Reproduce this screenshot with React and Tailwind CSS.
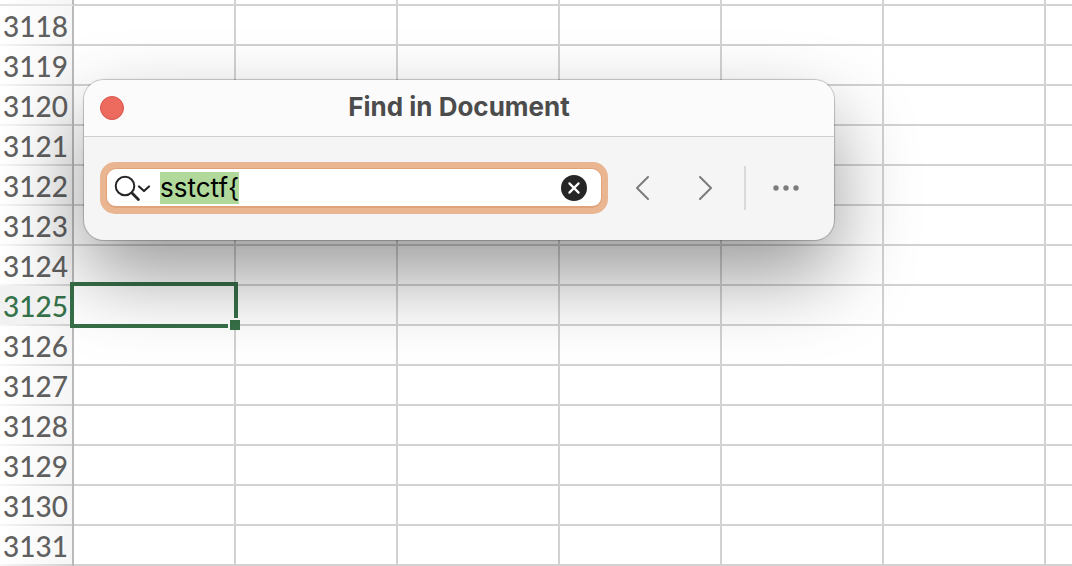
import { useEffect, useRef, useState } from "react";

const ROWS = Array.from({ length: 14 }, (_, i) => 3118 + i);
const COLUMNS = ["A", "B", "C", "D", "E", "F", "G"];
const ACTIVE = { row: 3125, column: "A" };

function RowHeader({ number, active }) {
  return (
    <th
      scope="row"
      className="h-full border-r-2 border-[#bababa] bg-linear-to-r from-[#f8f8f8] to-[#cfcfcf] p-0 pb-[2px] font-medium"
    >
      <div
        className={
          active
            ? "h-[38px] bg-linear-to-r from-[#f1f1f1] to-[#f5f5f5] pr-1 text-right text-[28px] leading-10 text-[#35724a]"
            : "h-[38px] bg-linear-to-r from-white to-[#f6f6f6] pr-1 text-right text-[28px] leading-10 text-[#5f5f5f]"
        }
      >
        {number}
      </div>
    </th>
  );
}

function Selection() {
  return (
    <div className="pointer-events-none absolute -inset-1 z-10 border-4 border-[#376f48]">
      <span className="absolute -right-[6px] -bottom-[6px] size-3 border-t-2 border-l-2 border-white bg-[#376f48]" />
    </div>
  );
}

function Sheet() {
  return (
    <table
      aria-label="Sheet"
      className="w-full table-fixed border-separate border-spacing-0 font-['Lato','Carlito',sans-serif]"
    >
      <colgroup>
        <col className="w-[74px]" />
        {COLUMNS.map((c) => (
          <col key={c} className={c === "G" ? "" : "w-[162px]"} />
        ))}
      </colgroup>
      <tbody>
        <tr className="h-[6px]">
          <td className="border-r-2 border-b-2 border-r-[#bababa] border-b-[#e4e4e4] bg-linear-to-r from-white to-[#f6f6f6] p-0" />
          {COLUMNS.map((c) => (
            <td key={c} className="border-r-2 border-b-2 border-[#d2d2d2] p-0 last:border-r-0" />
          ))}
        </tr>
        {ROWS.map((row) => (
          <tr key={row} className="h-10">
            <RowHeader number={row} active={row === ACTIVE.row} />
            {COLUMNS.map((c) => (
              <td key={c} className="relative border-r-2 border-b-2 border-[#d2d2d2] p-0 last:border-r-0">
                {row === ACTIVE.row && c === ACTIVE.column && <Selection />}
              </td>
            ))}
          </tr>
        ))}
      </tbody>
    </table>
  );
}

function FindWindow() {
  const [query, setQuery] = useState("sstctf{");
  const input = useRef(null);

  useEffect(() => {
    input.current.focus();
    input.current.select();
  }, []);

  return (
    <section
      role="dialog"
      aria-labelledby="find-title"
      className="absolute top-20 left-[84px] z-20 w-[750px] overflow-hidden rounded-[20px] bg-[#f5f5f5] font-['Inter',sans-serif] shadow-[0_0_1px_1px_rgba(0,0,0,0.22),0_36px_80px_rgba(0,0,0,0.4)]"
    >
      <header className="grid grid-cols-[24px_1fr_24px] items-center border-b border-[#cfcfcf] bg-[#fbfbfb] px-4 pt-[7px] pb-[9px]">
        <button
          type="button"
          aria-label="Close"
          className="mt-[2px] size-6 rounded-full border border-[#d9534a] bg-[#ec6a5e]"
        />
        <h1 id="find-title" className="text-center text-[26px] leading-10 font-bold text-[#4c4c4c]">
          Find in Document
        </h1>
      </header>
      <div className="flex items-center px-4 pt-[25px] pb-[26px]">
        <div className="w-[508px] rounded-[15px] bg-[#eab591] p-[6px]">
          <div className="flex h-10 items-center rounded-[10px] border border-b-2 border-[#dfa27a] bg-white pr-[14px] pl-[7px]">
            <svg className="h-7 w-10 shrink-0" viewBox="0 0 40 28" fill="none" stroke="#262626" strokeLinecap="round" aria-hidden="true">
              <circle cx="11" cy="12" r="9.3" strokeWidth="2" />
              <path d="M18 19 24.4 25.5" strokeWidth="2.8" />
              <path d="M25 12.5 30 17 35 12.5" strokeWidth="2.2" strokeLinejoin="round" />
            </svg>
            <input
              ref={input}
              type="text"
              aria-label="Find"
              value={query}
              onChange={(e) => setQuery(e.target.value)}
              className="ml-[6px] h-8 min-w-0 flex-1 bg-transparent p-0 text-[26px] leading-8 text-black outline-none selection:bg-[#b0d99b] selection:text-black"
            />
            <button type="button" aria-label="Clear" className="shrink-0" onClick={() => setQuery("")}>
              <svg className="size-[26px]" viewBox="0 0 26 26" aria-hidden="true">
                <circle cx="13" cy="13" r="13" fill="#262626" />
                <path d="M8.4 8.4 17.6 17.6M17.6 8.4 8.4 17.6" stroke="#fff" strokeWidth="2.2" strokeLinecap="round" />
              </svg>
            </button>
          </div>
        </div>
        <div className="flex items-center pl-[22px]">
          <button type="button" aria-label="Previous" className="p-[6px]">
            <svg className="h-7 w-[14px]" viewBox="0 0 14 28" fill="none" stroke="#7c7c7c" strokeWidth="2" strokeLinecap="round" strokeLinejoin="round" aria-hidden="true">
              <path d="M12 3 1 14 12 25" />
            </svg>
          </button>
          <button type="button" aria-label="Next" className="ml-9 p-[6px]">
            <svg className="h-7 w-[14px]" viewBox="0 0 14 28" fill="none" stroke="#7c7c7c" strokeWidth="2" strokeLinecap="round" strokeLinejoin="round" aria-hidden="true">
              <path d="M2 3 13 14 2 25" />
            </svg>
          </button>
          <div className="ml-[26px] h-11 w-[2px] bg-[#dadada]" />
          <button type="button" aria-label="More options" className="ml-5 p-[6px]">
            <svg className="h-7 w-7" viewBox="0 0 28 28" fill="#7c7c7c" aria-hidden="true">
              <circle cx="4" cy="14" r="2.7" />
              <circle cx="14" cy="14" r="2.7" />
              <circle cx="24" cy="14" r="2.7" />
            </svg>
          </button>
        </div>
      </div>
    </section>
  );
}

export default function App() {
  return (
    <main className="relative min-h-screen overflow-hidden bg-white">
      <Sheet />
      <FindWindow />
    </main>
  );
}
